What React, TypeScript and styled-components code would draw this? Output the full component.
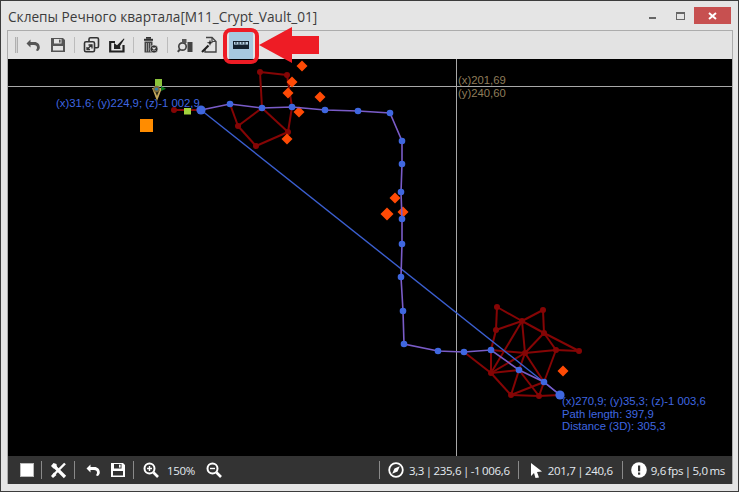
import React from "react";
import styled, { createGlobalStyle } from "styled-components";

const Global = createGlobalStyle`
  html, body { margin: 0; padding: 0; background: #e5e5e5; }
  #root { width: 739px; height: 492px; }
`;

const Win = styled.div`
  width: 739px; height: 492px; box-sizing: border-box;
  background: #e5e5e5; border: 1px solid #3c3c3c;
  display: flex; flex-direction: column;
  font-family: "Open Sans", "Liberation Sans", sans-serif;
  overflow: hidden;
`;
const TitleBar = styled.div`
  height: 29px; flex: none; display: flex; align-items: flex-start; justify-content: space-between;
  padding: 0 7px 0 7px;
`;
const Title = styled.div`
  font-size: 13.65px; line-height: 31px; color: #3c3c3c; white-space: nowrap;
`;
const WinButtons = styled.div`
  display: flex; align-items: flex-start;
`;
const WinBtn = styled.div<{ $w: number }>`
  width: ${p => p.$w}px; height: 17px; margin-top: 6px; display: flex; align-items: center; justify-content: center;
`;
const CloseBtn = styled.div`
  width: 37px; height: 17px; margin-top: 6px; background: #c75050;
  display: flex; align-items: center; justify-content: center;
`;
const Frame = styled.div`
  flex: 1; margin: 0 5px 7px 6px; border: 1px solid #acacac; border-bottom: 0;
  display: flex; flex-direction: column; min-height: 0;
`;
const ToolWrap = styled.div`
  position: relative; flex: none;
`;
const Toolbar = styled.div`
  height: 28px; background: #e3e3e3; display: flex; align-items: center; padding-left: 7px;
`;
const Grip = styled.div`
  width: 3px; height: 16px; border-left: 1px solid #b0b0b0; border-right: 1px solid #b0b0b0;
  margin-right: 2px; background: #d4d4d4; box-sizing: border-box;
`;
const TSep = styled.div`
  width: 1px; height: 16px; background: #bcbcbc; margin: 0 4px;
`;
const TBtn = styled.div`
  width: 25px; height: 28px; display: flex; align-items: center; justify-content: center;
`;
const ActiveBtn = styled.div`
  width: 24px; height: 28px; margin-left: 7px; display: flex; align-items: center; justify-content: center;
  background: #a6c9df;
`;
const Highlight = styled.div`
  position: absolute; left: 215px; top: -3px; width: 36px; height: 36px; box-sizing: border-box;
  border: 4px solid #ee1c25; border-radius: 8px; z-index: 2;
`;
const ArrowSvg = styled.svg`
  position: absolute; left: 251px; top: -4px; z-index: 2;
`;
const Canvas = styled.div`
  flex: 1; background: #000; min-height: 0;
`;
const MapSvg = styled.svg`
  display: block;
`;
const Status = styled.div`
  height: 28px; flex: none; background: #333; display: flex; align-items: center; padding-left: 12px; color: #e4eaf0;
  font-size: 11.5px; white-space: nowrap;
`;
const SSep = styled.div<{ $ml?: number }>`
  width: 1px; height: 18px; background: #8a8a8a; flex: none; margin-left: ${p => p.$ml ?? 0}px;
`;
const Spacer = styled.div`
  flex: 1;
`;
const SText = styled.span<{ $ml?: number }>`
  display: inline-block; letter-spacing: -0.3px; word-spacing: -1px; margin-left: ${p => p.$ml ?? 0}px;
`;
const Pair = styled.div<{ $gap?: number; $ml?: number; $mr?: number }>`
  display: flex; align-items: center; gap: ${p => p.$gap ?? 4}px;
  margin-left: ${p => p.$ml ?? 0}px; margin-right: ${p => p.$mr ?? 0}px;
`;

const O = 8, P = 59; // page-to-canvas offset

const blue: [number, number][] = [
  [201,110],[230,104],[262,108],[292,107],[325,110],[358,111],[390,113],[402,141],[402,164],[401,192],[402,219],[402,244],[401,277],[403,311],[404,344],[438,351],[464,352],[491,350],[519,370],[544,382],[560,395],
];
const redNodes: [number, number][] = [
  [174,110],[260,72],[287,75],[238,126],[256,146],[288,132],
  [497,307],[543,310],[522,321],[496,330],[544,333],[525,353],[556,350],[579,351],[491,373],[511,395],[539,396],
];
const redEdges: number[][] = [
  [174,110,201,110],[260,72,287,75],[260,72,262,108],[287,75,292,107],[292,107,288,132],[262,108,288,132],[262,108,238,126],[230,104,238,126],[238,126,256,146],[256,146,288,132],
  [497,307,522,321],[543,310,522,321],[543,310,544,333],[522,321,496,330],[522,321,544,333],[522,321,491,373],[496,330,497,307],[496,330,491,350],[491,350,491,373],[491,350,525,353],[525,353,556,350],[556,350,579,351],[544,333,579,351],[544,333,525,353],[544,333,556,350],[525,353,491,373],[525,353,519,370],[525,353,544,382],[491,373,519,370],[491,373,511,395],[519,370,511,395],[464,352,491,373],[511,395,544,382],[511,395,539,396],[539,396,560,395],[539,396,544,382],[522,321,525,353],[556,350,544,382],[519,370,539,396],
];
const diamonds: [number, number, number][] = [
  [302,66,5.5],[292,82,5.5],[288,93,5.5],[320,97,5.5],[299,112,5.5],[287,139,5.5],[395,198,5.5],[387,214,6.5],[403,212,5.5],[563,371,5.5],
];

const Ic = ({ children, w = 18, h = 18 }: { children: React.ReactNode; w?: number; h?: number }) => (
  <svg width={w} height={h} viewBox={`0 0 ${w} ${h}`}>{children}</svg>
);

const Undo = ({ c = "#555" }: { c?: string }) => (
  <Ic w={16} h={16}>
    <path d="M5.5 2.5 L1.5 6.5 L5.5 10.5 V8 H9 C11 8 12 9 12 10.5 C12 11.8 11.5 12.6 10.8 13.2 L12.8 14 C14.2 13 14.8 11.8 14.8 10.2 C14.8 7.4 12.6 5 9.5 5 H5.5 Z" fill={c} />
  </Ic>
);
const Save = ({ c = "#555", bg = "#e3e3e3" }: { c?: string; bg?: string }) => (
  <Ic w={16} h={16}>
    <path d="M1 1 H13 L15 3 V15 H1 Z" fill={c} />
    <rect x="3" y="9" width="10" height="4.5" fill={bg} />
    <rect x="4" y="2" width="7.5" height="4.5" fill={bg} />
    <rect x="9" y="2.6" width="1.6" height="3" fill={c} />
  </Ic>
);

export default function App() {
  return (
    <Win>
      <Global />
      <TitleBar>
        <Title>Склепы Речного квартала[M11_Crypt_Vault_01]</Title>
        <WinButtons>
          <WinBtn $w={27}><svg width="7" height="8"><rect width="7" height="2" y="5" fill="#666" /></svg></WinBtn>
          <WinBtn $w={28}>
            <svg width="9" height="8"><rect x="0.5" y="0.5" width="8" height="7" fill="none" stroke="#666" /><rect x="0" y="0" width="9" height="2" fill="#666" /></svg>
          </WinBtn>
          <CloseBtn>
            <svg width="9" height="8" viewBox="0 0 9 8"><path d="M1 1 L8 7 M8 1 L1 7" stroke="#fff" strokeWidth="2" /></svg>
          </CloseBtn>
        </WinButtons>
      </TitleBar>
      <Frame>
        <ToolWrap>
          <Toolbar>
            <Grip />
            <TBtn><Undo /></TBtn>
            <TBtn><Save /></TBtn>
            <TSep />
            <TBtn>
              <Ic w={17} h={18}>
                <rect x="6" y="1.7" width="9.5" height="10" rx="1.5" fill="#e3e3e3" stroke="#333" strokeWidth="1.6" />
                <rect x="1.5" y="5.8" width="10" height="10" rx="1.5" fill="#e3e3e3" stroke="#333" strokeWidth="1.6" />
                <path d="M4.5 13 L9 8.5 M5.5 9 H9 V12.5 M4 11 V13.5 H7" stroke="#333" strokeWidth="1.3" fill="none" />
              </Ic>
            </TBtn>
            <TBtn>
              <Ic w={16} h={16}>
                <path d="M1.2 5 H6 M1.2 4 V14.5 H14.5 V8" stroke="#222" strokeWidth="2.2" fill="none" />
                <path d="M5 12 L5 6 L8 8.2 L14.8 1.5 L15.5 2 L11 9 L11.5 12 Z" fill="#222" />
              </Ic>
            </TBtn>
            <TSep />
            <TBtn>
              <Ic w={15} h={18}>
                <rect x="3" y="1" width="5" height="1.8" fill="#333" />
                <rect x="1" y="2.8" width="9" height="2" fill="#333" />
                <path d="M1.5 5.5 H9.5 V16.5 H1.5 Z" fill="#444" />
                <path d="M3.5 7 V15.5 M5.5 7 V15.5 M7.5 7 V15.5" stroke="#bbb" strokeWidth="0.7" />
                <circle cx="11" cy="13" r="4" fill="#333" stroke="#e3e3e3" strokeWidth="0.6" />
                <path d="M9.5 11.5 L12.5 14.5 M12.5 11.5 L9.5 14.5" stroke="#e3e3e3" strokeWidth="1.2" />
              </Ic>
            </TBtn>
            <TSep />
            <TBtn>
              <Ic w={16} h={16}>
                <circle cx="5.5" cy="9.5" r="3.7" fill="none" stroke="#444" strokeWidth="1.7" />
                <path d="M2.8 12.5 L0.8 14.8" stroke="#444" strokeWidth="2" />
                <rect x="5" y="2" width="4.5" height="4" fill="#555" />
                <rect x="10.5" y="5" width="5" height="10" fill="#444" />
              </Ic>
            </TBtn>
            <TBtn>
              <Ic w={17} h={18}>
                <path d="M5 1.5 H11 L15 5.5 V16 H4 V13" fill="none" stroke="#444" strokeWidth="1.4" />
                <path d="M11 1.5 V5.5 H15" fill="none" stroke="#444" strokeWidth="1.2" />
                <path d="M1 16 L7.5 9.5" stroke="#222" strokeWidth="2.2" />
                <path d="M9 3.5 L9.8 6 L12.3 6.8 L9.8 7.6 L9 10 L8.2 7.6 L5.7 6.8 L8.2 6 Z" fill="#222" />
              </Ic>
            </TBtn>
            <ActiveBtn>
              <Ic w={16} h={8}>
                <rect width="16" height="8" fill="#13222e" />
                <rect x="1" y="1" width="14" height="2.6" fill="#b4d0e2" />
                <path d="M3 1 V3 M6 1 V3.6 M9 1 V3 M12 1 V3.6" stroke="#13222e" strokeWidth="1" />
              </Ic>
            </ActiveBtn>
          </Toolbar>
          <Highlight />
          <ArrowSvg width="60" height="36" viewBox="0 0 60 36">
            <path d="M0 18 L33 0 V9 H60 V27 H33 V36 Z" fill="#ee1c25" />
          </ArrowSvg>
        </ToolWrap>
        <Canvas>
          <MapSvg width="724" height="397" viewBox={`${O} ${P} 724 397`}>
            <line x1="8" x2="732" y1="86.5" y2="86.5" stroke="#a8a8a8" />
            <line x1="456.5" x2="456.5" y1="59" y2="456" stroke="#a8a8a8" />
            {redEdges.map((e, i) => (
              <line key={i} x1={e[0]} y1={e[1]} x2={e[2]} y2={e[3]} stroke="#850505" strokeWidth="2" />
            ))}
            {redNodes.map((n, i) => (
              <circle key={i} cx={n[0]} cy={n[1]} r="3" fill="#850505" />
            ))}
            {diamonds.map((d, i) => (
              <path key={i} d={`M${d[0]} ${d[1] - d[2]} L${d[0] + d[2]} ${d[1]} L${d[0]} ${d[1] + d[2]} L${d[0] - d[2]} ${d[1]} Z`} fill="#ff4a05" />
            ))}
            <rect x="140" y="119" width="13" height="13" fill="#ff8c00" />
            <rect x="184" y="108" width="7" height="6.5" fill="#a2d23c" />
            <rect x="155" y="79" width="7" height="7" fill="#8cc43c" />
            <path d="M152 88 L162 88 L157 101 Z" fill="#c4a95c" />
            <path d="M154.5 90 L159.5 90 L157 96 Z" fill="#2a2a1a" />
            <circle cx="156.5" cy="89" r="3.2" fill="#7a6a3a" />
            <circle cx="156.5" cy="89" r="1.6" fill="#2f7fb0" />
            <path d="M161 86 L166 88.7 L161 91 Z" fill="#0e7a1e" />
            <line x1="201" y1="110" x2="560" y2="395" stroke="#3b5fd0" strokeWidth="1.4" />
            <polyline points={blue.map(p => p.join(",")).join(" ")} fill="none" stroke="#7a5cc8" strokeWidth="1.6" />
            {blue.map((p, i) => (
              <circle key={i} cx={p[0]} cy={p[1]} r={i === 0 || i === blue.length - 1 ? 4.6 : 3.3} fill="#3f67e0" />
            ))}
            <g fontFamily="'Liberation Sans', sans-serif" fontSize="11.3" fill="#3f67e0">
              <text x="56" y="107">(x)31,6; (y)224,9; (z)-1 002,9</text>
              <text x="562" y="405">(x)270,9; (y)35,3; (z)-1 003,6</text>
              <text x="562" y="418">Path length: 397,9</text>
              <text x="562" y="430">Distance (3D): 305,3</text>
            </g>
            <g fontFamily="'Liberation Sans', sans-serif" fontSize="11.3" fill="#8f7d5a">
              <text x="458" y="84">(x)201,69</text>
              <text x="458" y="97">(y)240,60</text>
            </g>
          </MapSvg>
        </Canvas>
        <Status>
          <svg width="14" height="14"><rect x="0.5" y="0.5" width="13" height="13" fill="#fff" stroke="#bbb" /></svg>
          <SSep $ml={7} />
          <Pair $ml={8} $mr={7}>
            <svg width="17" height="17" viewBox="0 0 17 17">
              <path d="M3.5 3.5 L15 15" stroke="#fff" strokeWidth="3.2" />
              <path d="M15 1.5 L4 12.5" stroke="#fff" strokeWidth="2.4" />
              <path d="M1 14 L4 10.5 L6.5 13 L3 16 Z" fill="#fff" />
              <path d="M1 4 L3.5 1 L6.5 2 L7 6 L3.5 6.5 Z" fill="#fff" />
            </svg>
          </Pair>
          <SSep />
          <Pair $ml={10}><Undo c="#fff" /></Pair>
          <Pair $ml={9}><Save c="#fff" bg="#333" /></Pair>
          <SSep $ml={7} />
          <Pair $ml={9}>
            <svg width="16" height="16" viewBox="0 0 16 16">
              <circle cx="6.5" cy="6.5" r="5" fill="none" stroke="#fff" strokeWidth="2" />
              <path d="M10.5 10.5 L15 15" stroke="#fff" strokeWidth="2.6" />
              <path d="M4 6.5 H9 M6.5 4 V9" stroke="#fff" strokeWidth="1.4" />
            </svg>
          </Pair>
          <SText $ml={8}>150%</SText>
          <Pair $ml={11}>
            <svg width="16" height="16" viewBox="0 0 16 16">
              <circle cx="6.5" cy="6.5" r="5" fill="none" stroke="#fff" strokeWidth="2" />
              <path d="M10.5 10.5 L15 15" stroke="#fff" strokeWidth="2.6" />
              <path d="M4 6.5 H9" stroke="#fff" strokeWidth="1.4" />
            </svg>
          </Pair>
          <Spacer />
          <SSep />
          <Pair $ml={8} $gap={5}>
            <svg width="16" height="16" viewBox="0 0 16 16">
              <circle cx="8" cy="8" r="6.8" fill="none" stroke="#fff" strokeWidth="1.8" />
              <path d="M11.8 4.2 L9.5 9.5 L4.2 11.8 L6.5 6.5 Z" fill="#fff" />
            </svg>
            <SText>3,3 | 235,6 | -1 006,6</SText>
          </Pair>
          <SSep $ml={8} />
          <Pair $ml={11} $gap={6}>
            <svg width="12" height="15" viewBox="0 0 12 15"><path d="M1 0 L12 8.5 L7 9 L9 14.5 L5.5 15 L4 10 L1 13 Z" fill="#fff" /></svg>
            <SText>201,7 | 240,6</SText>
          </Pair>
          <SSep $ml={9} />
          <Pair $ml={8} $mr={7} $gap={4}>
            <svg width="16" height="16" viewBox="0 0 16 16">
              <circle cx="8" cy="8" r="7.8" fill="#fff" />
              <rect x="7" y="3.5" width="2.2" height="5.8" fill="#333" />
              <rect x="7" y="10.5" width="2.2" height="2.2" fill="#333" />
            </svg>
            <SText>9,6 fps | 5,0 ms</SText>
          </Pair>
        </Status>
      </Frame>
    </Win>
  );
}
